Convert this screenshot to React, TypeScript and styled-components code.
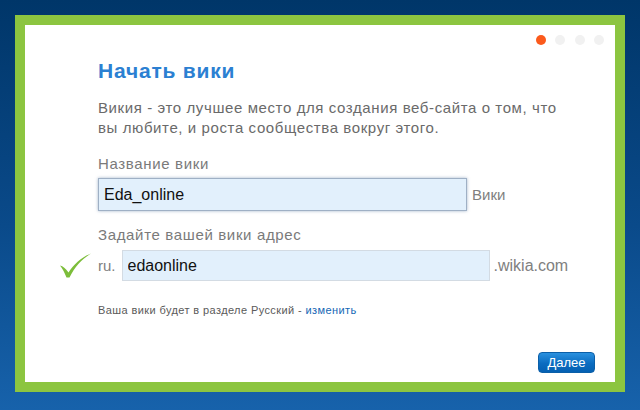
import React from "react";
import styled, { createGlobalStyle } from "styled-components";

const Global = createGlobalStyle`
  html, body { margin: 0; padding: 0; }
  body {
    width: 640px;
    height: 410px;
    overflow: hidden;
    background: linear-gradient(to bottom, #003669 0%, #0a4a8a 55%, #1762ab 100%);
    font-family: Arial, "Liberation Sans", sans-serif;
  }
`;

const Page = styled.div`
  padding: 15px;
`;

const Frame = styled.div`
  width: 590px;
  height: 357px;
  border: 10px solid #8cc540;
  background: #ffffff;
  display: flex;
  flex-direction: column;
`;

const Steps = styled.div`
  display: flex;
  justify-content: flex-end;
  gap: 9.5px;
  padding: 10px 11px 0 0;
`;

const Dot = styled.span<{ $active?: boolean }>`
  width: 10px;
  height: 10px;
  border-radius: 50%;
  background: ${(p) => (p.$active ? "#fb5a1c" : "#f1f1f1")};
`;

const Content = styled.div`
  padding-left: 73px;
  display: flex;
  flex-direction: column;
`;

const Title = styled.h1`
  margin: 14px 0 0;
  font-size: 21px;
  line-height: 24px;
  font-weight: bold;
  letter-spacing: 0.8px;
  color: #2b80d2;
`;

const Description = styled.p`
  margin: 15px 0 0;
  width: 482px;
  font-size: 15px;
  line-height: 20px;
  letter-spacing: 0.6px;
  color: #6a6a6a;
`;

const Label = styled.div<{ $top: number }>`
  margin-top: ${(p) => p.$top}px;
  font-size: 15px;
  line-height: 18px;
  letter-spacing: 0.65px;
  color: #7a7a7a;
`;

const FieldRow = styled.div<{ $top: number }>`
  margin-top: ${(p) => p.$top}px;
  display: flex;
  align-items: center;
`;

const TextInput = styled.input<{ $w: number; $h: number; $focus?: boolean }>`
  box-sizing: border-box;
  width: ${(p) => p.$w}px;
  height: ${(p) => p.$h}px;
  margin: 0;
  padding: 0 0 0 5px;
  border: 1px solid ${(p) => (p.$focus ? "#9fb0c5" : "#d3dbe3")};
  box-shadow: ${(p) => (p.$focus ? "0 0 3px rgba(90,120,160,0.55)" : "none")};
  background: #e2f0fc;
  font-family: Arial, "Liberation Sans", sans-serif;
  font-size: 16px;
  color: #111;
  outline: none;
`;

const Suffix = styled.span<{ $size: number; $gap: number }>`
  margin-left: ${(p) => p.$gap}px;
  font-size: ${(p) => p.$size}px;
  color: #808080;
`;

const Prefix = styled.span`
  margin: 0 6px 0 6px;
  font-size: 15px;
  color: #808080;
`;

const Check = styled.svg`
  margin-left: -39px;
  width: 33px;
  height: 25px;
  flex: none;
`;

const Note = styled.div`
  margin-top: 22px;
  font-size: 11px;
  line-height: 14px;
  letter-spacing: 0.4px;
  color: #5a5a5a;
`;

const Link = styled.a`
  color: #1667b5;
  text-decoration: none;
`;

const Footer = styled.div`
  margin-top: auto;
  display: flex;
  justify-content: flex-end;
  padding: 0 20px 9px 0;
`;

const Button = styled.button`
  box-sizing: border-box;
  width: 57px;
  height: 21px;
  padding: 0;
  border: 1px solid #0b5fa8;
  border-radius: 4px;
  background: linear-gradient(to bottom, #2a91df 0%, #0b6cc0 55%, #0560b2 100%);
  color: #ffffff;
  font-family: Arial, "Liberation Sans", sans-serif;
  font-size: 13px;
  line-height: 19px;
  cursor: pointer;
`;

export default function App() {
  return (
    <>
      <Global />
      <Page>
        <Frame>
          <Steps>
            <Dot $active />
            <Dot />
            <Dot />
            <Dot />
          </Steps>
          <Content>
            <Title>Начать вики</Title>
            <Description>
              Викия - это лучшее место для создания веб-сайта о том, что вы любите, и роста сообщества вокруг этого.
            </Description>
            <Label $top={17}>Название вики</Label>
            <FieldRow $top={5}>
              <TextInput $w={369} $h={33} $focus readOnly value="Eda_online" />
              <Suffix $size={15} $gap={5}>Вики</Suffix>
            </FieldRow>
            <Label $top={15}>Задайте вашей вики адрес</Label>
            <FieldRow $top={6}>
              <Check viewBox="0 0 33 25">
                <path
                  d="M1 12.5 C4 13 6.5 15.5 9.5 19.5 C15 11 22 4.5 32 0.5 C23 6 16 13.5 10.5 24.5 C9 24.5 8 24.5 7.5 24.5 C5.5 19.5 3.5 15.5 1 12.5 Z"
                  fill="#7cbd3a"
                />
              </Check>
              <Prefix>ru.</Prefix>
              <TextInput $w={368} $h={31} readOnly value="edaonline" />
              <Suffix $size={16} $gap={4}>.wikia.com</Suffix>
            </FieldRow>
            <Note>
              Ваша вики будет в разделе Русский - <Link href="#">изменить</Link>
            </Note>
          </Content>
          <Footer>
            <Button>Далее</Button>
          </Footer>
        </Frame>
      </Page>
    </>
  );
}
